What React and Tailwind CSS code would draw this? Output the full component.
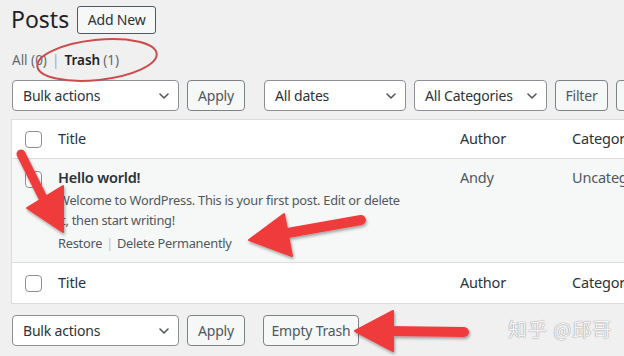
import React from "react";

const font = { fontFamily: '"Noto Sans", "Open Sans", sans-serif' };

function Chevron() {
  return (
    <svg width="12" height="12" viewBox="0 0 12 12" className="shrink-0">
      <path d="M2 4 L6 8 L10 4" fill="none" stroke="#50575e" strokeWidth="1.6" strokeLinecap="round" strokeLinejoin="round" />
    </svg>
  );
}

function Select({ label, w, extra = "" }) {
  return (
    <div className={`flex shrink-0 items-center justify-between h-[31px] ${w} ${extra} border border-[#8c8f94] rounded-[4px] bg-white pl-[10px] pr-[8px] text-[14px] tracking-[-0.2px] whitespace-nowrap text-[#2c3338]`}>
      <span>{label}</span>
      <Chevron />
    </div>
  );
}

function Btn({ label, w, extra = "" }) {
  return (
    <div className={`flex shrink-0 items-center justify-center h-[31px] ${w} ${extra} border border-[#7e8287] rounded-[4px] bg-[#f6f7f7] text-[14px] tracking-[-0.2px] whitespace-nowrap text-[#50575e]`}>
      {label}
    </div>
  );
}

function Check() {
  return <div className="w-[17px] h-[17px] border border-[#8c8f94] rounded-[4px] bg-white" />;
}

export default function App() {
  return (
    <div style={font} className="relative w-[624px] h-[356px] overflow-hidden bg-[#f0f0f1] text-[#3c434a]">
      {/* header */}
      <div className="flex items-center pl-[11px] pt-[4px] gap-[8px] h-[31px] box-content">
        <span className="text-[23px] text-[#1d2327] leading-none">Posts</span>
        <div className="flex items-center justify-center h-[28px] w-[79px] border border-[#50575e] rounded-[3px] bg-[#f6f7f7] text-[14px] tracking-[-0.2px] text-[#2c3338]">
          Add New
        </div>
      </div>
      {/* subsubsub */}
      <div className="pl-[12px] mt-[16px] h-[18px] text-[13.5px] leading-[18px] flex items-center gap-[5px]">
        <span className="text-[#646970]">All (0)</span>
        <span className="text-[#a7aaad]">|</span>
        <span className="text-[#1d2327] font-semibold">Trash</span>
        <span className="text-[#646970] -ml-[2px]">(1)</span>
      </div>
      {/* top controls */}
      <div className="flex items-center pl-[12px] mt-[11px] gap-[8px]">
        <Select label="Bulk actions" w="w-[167px]" />
        <Btn label="Apply" w="w-[58px]" />
        <Select label="All dates" w="w-[142px]" extra="ml-[11px]" />
        <Select label="All Categories" w="w-[133px]" />
        <Btn label="Filter" w="w-[53px]" />
        <div className="h-[31px] w-[40px] border border-[#7e8287] rounded-[4px] bg-[#f6f7f7] shrink-0" />
      </div>
      {/* table */}
      <div className="ml-[11px] mt-[8px] w-[640px] border border-[#dcdcde] bg-white text-[14.5px] tracking-[-0.2px]">
        <div className="grid grid-cols-[46px_402px_112px_1fr] h-[39px] items-center border-b border-[#dcdcde] text-[#2c3338]">
          <div className="pl-[13px]"><Check /></div>
          <div>Title</div>
          <div>Author</div>
          <div className="whitespace-nowrap">Categories</div>
        </div>
        <div className="grid grid-cols-[46px_402px_112px_1fr] h-[104px] bg-[#f6f7f7] border-b border-[#dcdcde]">
          <div className="pl-[13px] pt-[12px]"><Check /></div>
          <div className="pt-[8px]">
            <div className="font-semibold text-[#2c3338] leading-[20px]">Hello world!</div>
            <div className="w-[348px] text-[12.8px] tracking-[-0.25px] text-[#50575e] leading-[20px] mt-[3px]">
              Welcome to WordPress. This is your first post. Edit or delete it, then start writing!
            </div>
            <div className="text-[12.8px] tracking-[-0.25px] text-[#50575e] leading-[20px] mt-[3px] flex items-center">
              <span>Restore</span>
              <span className="text-[#c3c4c7] mx-[4px]">|</span>
              <span>Delete Permanently</span>
            </div>
          </div>
          <div className="pt-[8px] leading-[20px] text-[#50575e]">Andy</div>
          <div className="pt-[8px] leading-[20px] text-[#50575e] whitespace-nowrap">Uncategorized</div>
        </div>
        <div className="grid grid-cols-[46px_402px_112px_1fr] h-[40px] items-center text-[#2c3338]">
          <div className="pl-[13px]"><Check /></div>
          <div>Title</div>
          <div>Author</div>
          <div className="whitespace-nowrap">Categories</div>
        </div>
      </div>
      {/* bottom controls */}
      <div className="flex items-center pl-[12px] mt-[11px] gap-[8px]">
        <Select label="Bulk actions" w="w-[167px]" />
        <Btn label="Apply" w="w-[58px]" />
        <Btn label="Empty Trash" w="w-[96px]" extra="ml-[10px]" />
      </div>

      {/* watermark */}
      <div
        className="absolute left-[508px] top-[319px] text-[19px] text-[#f4f4f4] tracking-[1px] leading-none"
        style={{
          fontFamily: '"Noto Sans CJK SC", sans-serif',
          textShadow: "0 0 1px #9a9a9a, 0 0 1px #9a9a9a",
        }}
      >
        知乎 @邱哥
      </div>

      {/* annotations */}
      <svg className="absolute inset-0 pointer-events-none" width="624" height="356" viewBox="0 0 624 356">
        <defs>
          <filter id="sh" x="-20%" y="-20%" width="140%" height="140%">
            <feDropShadow dx="1" dy="2" stdDeviation="1.5" floodColor="#000" floodOpacity="0.35" />
          </filter>
        </defs>
        <ellipse cx="97" cy="60" rx="60" ry="20" fill="none" stroke="#cc4b4b" strokeWidth="2" transform="rotate(-6 97 60)" />
        <g filter="url(#sh)" fill="#ef3b3b" stroke="#ef3b3b" strokeLinejoin="round">
          <line x1="21" y1="154" x2="44" y2="200" strokeWidth="9" strokeLinecap="round" />
          <polygon points="27,208 63,186 63,232" strokeWidth="2" />
          <line x1="361" y1="220" x2="282" y2="234" strokeWidth="10" strokeLinecap="round" />
          <polygon points="284,214 292,256 249,240" strokeWidth="2" />
          <line x1="464" y1="332" x2="388" y2="331" strokeWidth="10" strokeLinecap="round" />
          <polygon points="393,311 393,351 355,331" strokeWidth="2" />
        </g>
      </svg>
    </div>
  );
}
